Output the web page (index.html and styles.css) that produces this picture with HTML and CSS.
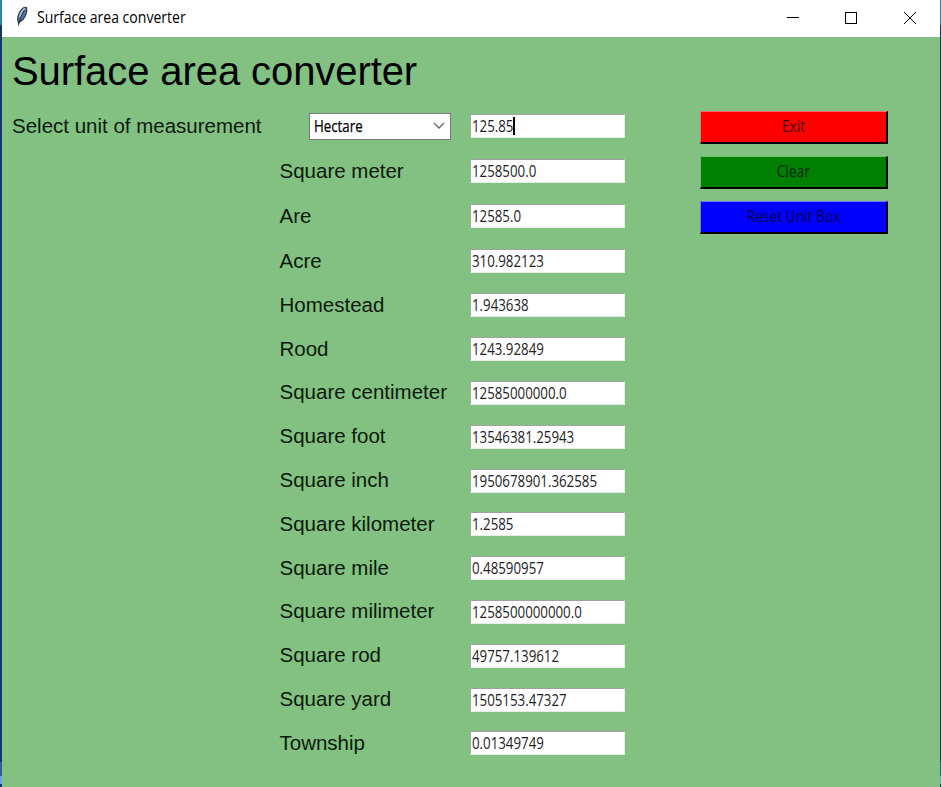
FILE: index.html
```html
<!DOCTYPE html>
<html lang="en">
<head>
<meta charset="utf-8">
<title>Surface area converter</title>
<link rel="stylesheet" href="styles.css">
</head>
<body>
<div class="window">
  <header class="titlebar">
    <svg class="feather" width="14" height="22" viewBox="0 0 14 22">
      <path d="M3.500 17C1.600 13.500 3 8 6 4 8 1.500 10.500 .8 11.500 1.500 12.500 5 11 10.500 8 13.500 6.500 15 5 15.500 3.500 17Z" fill="#4e739e" stroke="#3a3c42" stroke-width="1.200"/>
      <path d="M9.800 2.500C7.500 4.500 5.500 8 4.800 11.500" fill="none" stroke="#a9c6e3" stroke-width="1.800"/>
      <path d="M9.500 4C7 8 4.500 13 3.500 19.500" fill="none" stroke="#222a38" stroke-width="1"/>
    </svg>
    <span class="caption">Surface area converter</span>
    <svg class="controls" width="130" height="14" viewBox="0 0 130 14" fill="none" stroke="#000" stroke-width="1">
      <path d="M0 7.500H12"/>
      <rect x="58.500" y="2.500" width="11" height="11"/>
      <path d="M117 2L129 14M129 2L117 14"/>
    </svg>
  </header>
  <main class="client">
    <h1>Surface area converter</h1>
    <div class="content">
      <div class="form">
        <div class="row tall first">
          <label class="prompt">Select unit of measurement</label>
          <div class="combo"><span class="ui">Hectare</span>
            <svg width="12" height="7" viewBox="0 0 12 7" fill="none" stroke="#666" stroke-width="1.300"><path d="M1 1L6 6 11 1"/></svg>
          </div>
          <div class="entry"><span class="ui">125.85</span><i class="caret"></i></div>
        </div>
        <div class="row tall"><label>Square meter</label><div class="entry"><span class="ui">1258500.0</span></div></div>
        <div class="row tall"><label>Are</label><div class="entry"><span class="ui">12585.0</span></div></div>
        <div class="row tall"><label>Acre</label><div class="entry"><span class="ui">310.982123</span></div></div>
        <div class="row"><label>Homestead</label><div class="entry"><span class="ui">1.943638</span></div></div>
        <div class="row"><label>Rood</label><div class="entry"><span class="ui">1243.92849</span></div></div>
        <div class="row"><label>Square centimeter</label><div class="entry"><span class="ui">12585000000.0</span></div></div>
        <div class="row"><label>Square foot</label><div class="entry"><span class="ui">13546381.25943</span></div></div>
        <div class="row"><label>Square inch</label><div class="entry"><span class="ui">1950678901.362585</span></div></div>
        <div class="row"><label>Square kilometer</label><div class="entry"><span class="ui">1.2585</span></div></div>
        <div class="row"><label>Square mile</label><div class="entry"><span class="ui">0.48590957</span></div></div>
        <div class="row"><label>Square milimeter</label><div class="entry"><span class="ui">1258500000000.0</span></div></div>
        <div class="row"><label>Square rod</label><div class="entry"><span class="ui">49757.139612</span></div></div>
        <div class="row"><label>Square yard</label><div class="entry"><span class="ui">1505153.47327</span></div></div>
        <div class="row"><label>Township</label><div class="entry"><span class="ui">0.01349749</span></div></div>
      </div>
      <div class="actions">
        <button class="exit"><span class="ui">Exit</span></button>
        <button class="clear"><span class="ui">Clear</span></button>
        <button class="reset"><span class="ui">Reset Unit Box</span></button>
      </div>
    </div>
  </main>
</div>
</body>
</html>
```
FILE: styles.css
```css
* { box-sizing: border-box; }
body { margin: 0; background: #82c182; overflow: hidden; }
.window {
  height: 787px;
  display: flex;
  flex-direction: column;
  border-left: 2px solid #12386b;
  border-image: linear-gradient(#2c7fae 0 27px, #12386b 27px 760px, #2c5f92 760px 774px, #6da5d8 774px 782px, #12386b 782px) 2;
  border-right: 1px solid #1783d0;
}
.titlebar {
  height: 37px;
  flex: none;
  display: flex;
  align-items: center;
  background: #fff;
  padding: 0 23px 3px 13px;
}
.feather { margin-right: 8px; }
.caption {
  font: 15.5px/20px "Open Sans", sans-serif;
  color: #000;
  transform: scaleX(.905);
  transform-origin: left;
}
.controls { margin-left: auto; }
.client { flex: 1; background: #82c182; color: #000; }
h1 {
  margin: 0;
  padding: 11px 0 0 10px;
  height: 67px;
  font: 40px/46px "Liberation Sans", Arial, sans-serif;
  letter-spacing: -.08px;
}
.content { display: flex; }
.form { width: 698px; }
.row {
  height: 43.8px;
  display: grid;
  grid-template-columns: 190.500px 155px;
  padding-left: 277.500px;
  align-items: center;
}
.row.tall { height: 45px; }
.row.first { grid-template-columns: 297px 161px 155px; padding-left: 10px; }
label {
  font: 20.5px/24px "Liberation Sans", Arial, sans-serif;
  margin-top: -2px;
  color: #0a1a0a;
  white-space: nowrap;
}
.ui {
  display: inline-block;
  font: 16px/20px "Open Sans", sans-serif;
  white-space: nowrap;
  transform: scaleX(.83);
  transform-origin: left;
}
.entry {
  position: relative;
  height: 24px;
  margin-top: -1px;
  padding: 1px 0 0 1px;
  background: #fff;
  border: 1px solid #e3efe3;
  border-top-color: #a0a0a0;
  border-left-color: #a0b0a0;
  color: #222;
  line-height: 20px;
}
.caret { position: absolute; left: 42px; top: 2px; width: 2px; height: 18px; background: #000; }
.combo {
  width: 142px;
  height: 27px;
  display: flex;
  align-items: center;
  justify-content: space-between;
  padding: 0 5px 2px 4px;
  background: #fff;
  border: 1px solid #7a7a7a;
  color: #000;
}
.combo .ui { -webkit-text-stroke: .25px #000; }
.actions { display: flex; flex-direction: column; gap: 12px; padding-top: 7px; }
button {
  width: 188px;
  height: 33px;
  padding: 0 0 2px;
  border: solid #000;
  border-width: 1px 2px 2px 1px;
  color: #000;
}
button .ui { transform-origin: center; transform: scaleX(.86); opacity: .75; }
.exit { background: #f00; border-top-color: #ff6d6d; border-left-color: #ff6d6d; }
.clear { background: #008000; border-top-color: #6dbd6d; border-left-color: #6dbd6d; }
.reset { background: #00f; border-top-color: #7373ff; border-left-color: #7373ff; }
```
